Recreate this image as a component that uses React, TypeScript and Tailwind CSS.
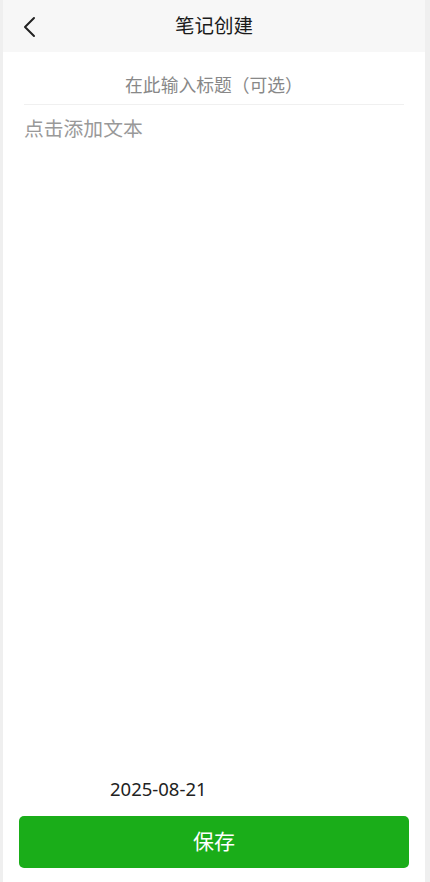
import React from "react";

export default function App() {
  const font = { fontFamily: '"Noto Sans", "Noto Sans CJK SC", sans-serif' };
  return (
    <div className="w-[430px] h-[882px] bg-[#efefef] pl-[3px] pr-[5px] flex" style={font}>
      <div className="flex-1 bg-white flex flex-col">
        <div className="h-[52px] bg-[#f7f7f7] relative flex items-center justify-center">
          <svg className="absolute left-[18px] top-[16px]" width="18" height="22" viewBox="0 0 18 22" fill="none">
            <path d="M13 2 L4 11 L13 20" stroke="#222" strokeWidth="2" strokeLinecap="round" strokeLinejoin="round" />
          </svg>
          <span className="text-[19.5px] text-[#1a1a1a]">笔记创建</span>
        </div>
        <div className="mx-[21px] h-[53px] border-b border-[#f0f0f0] flex items-center justify-center">
          <span className="text-[17.8px] text-[#888888] pt-[14px]">在此输入标题（可选）</span>
        </div>
        <div className="px-[21px] pt-[10px] text-[19.8px] text-[#999999] leading-[28px]">点击添加文本</div>
        <div className="flex-1" />
        <div className="pl-[107px] text-[18.5px] text-[#222222] leading-[24px] mb-[15px]">2025-08-21</div>
        <div className="px-[16px] pb-[14px]">
          <button className="w-full h-[52px] rounded-[5px] bg-[#1aad19] text-white text-[21px] flex items-center justify-center">
            保存
          </button>
        </div>
      </div>
    </div>
  );
}
